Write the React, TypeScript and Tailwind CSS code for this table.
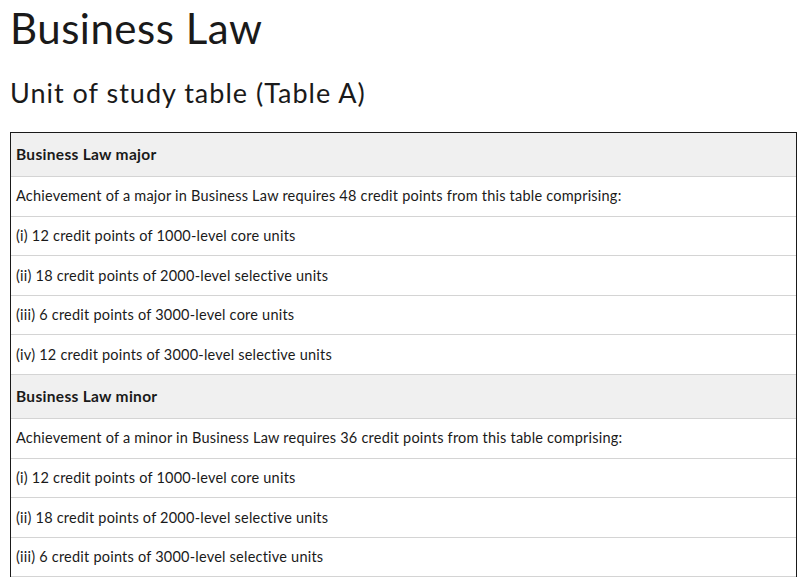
import React from 'react';

type Row = { text: string; heading?: boolean };

const rows: Row[] = [
  { text: 'Business Law major', heading: true },
  { text: 'Achievement of a major in Business Law requires 48 credit points from this table comprising:' },
  { text: '(i) 12 credit points of 1000-level core units' },
  { text: '(ii) 18 credit points of 2000-level selective units' },
  { text: '(iii) 6 credit points of 3000-level core units' },
  { text: '(iv) 12 credit points of 3000-level selective units' },
  { text: 'Business Law minor', heading: true },
  { text: 'Achievement of a minor in Business Law requires 36 credit points from this table comprising:' },
  { text: '(i) 12 credit points of 1000-level core units' },
  { text: '(ii) 18 credit points of 2000-level selective units' },
  { text: '(iii) 6 credit points of 3000-level selective units' },
];

const App: React.FC = () => {
  return (
    <div className="bg-white min-h-screen px-[10px] pt-[2px] text-[#1a1a1a] font-['Lato',sans-serif]">
      <h1 className="text-[42px] leading-[52px] font-normal tracking-[0.5px]">Business Law</h1>
      <h2 className="mt-[22px] text-[27px] leading-[34px] font-normal tracking-[1px]">Unit of study table (Table A)</h2>

      {/* table A */}
      <div className="mt-[22px] w-[787px] border border-b-0 border-[#1a1a1a]">
        {rows.map((row, i) => (
          <div
            key={i}
            className={
              row.heading
                ? 'h-[44px] flex items-center px-[5px] bg-[#f0f0f0] border-b border-[#d4d4d4] text-[15.5px] font-bold tracking-[0.3px]'
                : 'h-[39.6px] flex items-center px-[5px] border-b border-[#d4d4d4] text-[14.5px] tracking-[0.22px]'
            }
          >
            {row.text}
          </div>
        ))}
      </div>
    </div>
  );
};

export default App;
